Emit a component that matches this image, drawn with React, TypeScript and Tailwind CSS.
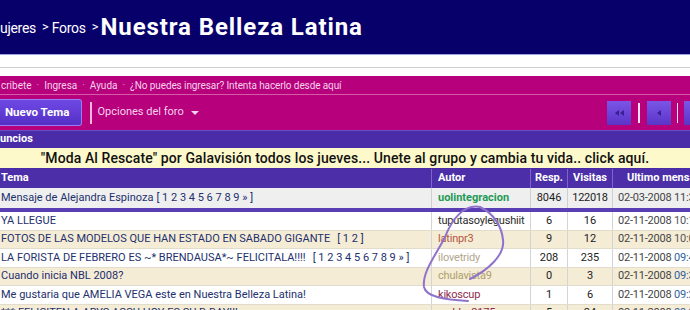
import React from 'react';

type Topic = {
  title: string;
  pages?: string;
  author: string;
  authorColor: string;
  resp: string;
  visits: string;
  date: string;
  time: string;
  timeColor: string;
  beige: boolean;
};

const TOPICS: Topic[] = [
  { title: 'YA LLEGUE', author: 'tuputasoylegushiit', authorColor: 'text-[#2a2a2a]', resp: '6', visits: '16', date: '02-11-2008', time: '10:19 PM', timeColor: 'text-[#555]', beige: false },
  { title: 'FOTOS DE LAS MODELOS QUE HAN ESTADO EN SABADO GIGANTE', pages: '[ 1 2 ]', author: 'latinpr3', authorColor: 'text-[#b3573c]', resp: '9', visits: '12', date: '02-11-2008', time: '10:07 PM', timeColor: 'text-[#555]', beige: true },
  { title: 'LA FORISTA DE FEBRERO ES ~* BRENDAUSA*~ FELICITALA!!!!', pages: '[ 1 2 3 4 5 6 7 8 9 » ]', author: 'ilovetridy', authorColor: 'text-[#b3a58e]', resp: '208', visits: '235', date: '02-11-2008', time: '09:40 PM', timeColor: 'text-[#2f5f9e]', beige: false },
  { title: 'Cuando inicia NBL 2008?', author: 'chulavista9', authorColor: 'text-[#ad9f6c]', resp: '0', visits: '3', date: '02-11-2008', time: '09:32 PM', timeColor: 'text-[#2f5f9e]', beige: true },
  { title: 'Me gustaria que AMELIA VEGA este en Nuestra Belleza Latina!', author: 'kikoscup', authorColor: 'text-[#8c2c4c]', resp: '1', visits: '6', date: '02-11-2008', time: '09:26 PM', timeColor: 'text-[#2f5f9e]', beige: false },
  { title: '*** FELICITEN A ARYS ACSU HOY ES SU B-DAY!!!', author: 'yaddsy2175', authorColor: 'text-[#8c2c4c]', resp: '5', visits: '24', date: '02-11-2008', time: '09:20 PM', timeColor: 'text-[#2f5f9e]', beige: true },
];

const COLS = 'grid grid-cols-[431px_99px_37px_45px_106px]';

const NavButton: React.FC<{ double?: boolean }> = ({ double }) => (
  <div className="w-[24px] h-[24px] bg-gradient-to-b from-[#7a55e6] to-[#5b34c8] flex items-center justify-center gap-[1px]">
    <span className="w-0 h-0 border-y-[3px] border-y-transparent border-r-[4px] border-r-[#3a1f95]" />
    {double && <span className="w-0 h-0 border-y-[3px] border-y-transparent border-r-[4px] border-r-[#3a1f95]" />}
  </div>
);

const App: React.FC = () => {
  return (
    <div className="w-[690px] h-[310px] overflow-hidden bg-white relative font-['Roboto',sans-serif]">
      <div className="w-[720px]">
        {/* breadcrumb */}
        <div className="h-[55px] bg-[#07006b] border-b border-[#9aa2e6] flex items-center text-white">
          <span className="text-[14px] tracking-[-0.3px] mt-[2px]">ujeres</span>
          <span className="text-[13px] ml-[6px] mr-[3px]">&gt;</span>
          <span className="text-[14px] tracking-[-0.3px] mt-[2px]">Foros</span>
          <span className="text-[13px] ml-[6px] mr-[2px]">&gt;</span>
          <span className="text-[24px] font-bold tracking-[0.9px]">Nuestra Belleza Latina</span>
        </div>
        <div className="h-[21px] bg-white flex flex-col">
          <div className="h-[12px]" />
          <div className="h-px bg-[#cfcfcf]" />
        </div>

        {/* links */}
        <div className="h-[19px] bg-[#b6007c] border-b border-[#d65aa8] flex items-center text-[10px] text-[#f6d2ec] gap-[5px]">
          <span className="ml-[1px]">cribete</span>
          <span className="text-[#e08cc6]">·</span>
          <span>Ingresa</span>
          <span className="text-[#e08cc6]">·</span>
          <span>Ayuda</span>
          <span className="text-[#e08cc6]">·</span>
          <span className="tracking-[-0.1px]">¿No puedes ingresar? Intenta hacerlo desde aquí</span>
        </div>

        {/* toolbar */}
        <div className="h-[35px] bg-[#b6007c] flex items-center pr-[12px]">
          <div className="h-[27px] w-[82px] rounded-r-[3px] border border-l-0 border-[#9a7cf0] bg-gradient-to-b from-[#6f48e4] to-[#5430c6] flex items-center pl-[5px] text-white text-[11.5px] font-bold">
            Nuevo Tema
          </div>
          <div className="w-[1.5px] h-[22px] bg-[#f2b8dc] ml-[8px]" />
          <div className="ml-[6px] flex items-center text-[11px] text-[#f6d2ec]">
            Opciones del foro
            <span className="ml-[7px] w-0 h-0 border-x-[4px] border-x-transparent border-t-[4px] border-t-[#f6d2ec]" />
          </div>
          <div className="ml-auto flex items-center">
            <NavButton double />
            <div className="w-[1.5px] h-[20px] bg-[#fbe0f0] mx-[7px]" />
            <NavButton />
            <div className="w-[1.5px] h-[20px] bg-[#fbe0f0] mx-[6px]" />
            <NavButton />
          </div>
        </div>

        {/* announcements */}
        <div className="h-[17px] bg-[#4a2ca8] border-t border-[#6a4cc8] flex items-center text-[11px] font-bold text-white">
          uncios
        </div>
        <div className="w-[690px] h-[22px] bg-[#fdf9cb] border-y border-[#4a2ca8] flex items-center justify-center text-[14px] font-medium text-[#111] tracking-[0.1px]">
          "Moda Al Rescate" por Galavisión todos los jueves... Unete al grupo y cambia tu vida.. click aquí.
        </div>

        {/* table header */}
        <div className={`${COLS} h-[19px] bg-[#4b2ea8] text-[11px] font-bold text-white`}>
          <div className="flex items-center pl-[1px]">Tema</div>
          <div className="flex items-center pl-[6px] border-l border-[#7a66cc]">Autor</div>
          <div className="flex items-center justify-center border-l border-[#7a66cc]">Resp.</div>
          <div className="flex items-center justify-center border-l border-[#7a66cc]">Visitas</div>
          <div className="flex items-center justify-center border-l border-[#7a66cc]">Ultimo mensaje</div>
        </div>

        {/* sticky */}
        <div className={`${COLS} h-[20px] bg-[#efefef] text-[11px] text-[#222]`}>
          <div className="flex items-center pl-[1px] text-[#23306e] whitespace-nowrap">
            Mensaje de Alejandra Espinoza <span className="ml-[3px]">[ 1 2 3 4 5 6 7 8 9 » ]</span>
          </div>
          <div className="flex items-center pl-[6px] border-l border-[#cfcfcf] font-bold text-[#1f9a55]">uolintegracion</div>
          <div className="flex items-center justify-center border-l border-[#cfcfcf]">8046</div>
          <div className="flex items-center justify-center border-l border-[#cfcfcf] tracking-[-0.3px]">122018</div>
          <div className="flex items-center pl-[5px] border-l border-[#cfcfcf] whitespace-nowrap text-[#444] tracking-[-0.2px]">02-03-2008 11:32 AM</div>
        </div>
        <div className="h-[4px] bg-[#5a3eb4]" />

        {/* topics */}
        {TOPICS.map((t, i) => (
          <div
            key={i}
            className={`${COLS} h-[18.5px] border-b border-[#e2dccd] text-[11px] text-[#222] ${t.beige ? 'bg-[#f5ecd6]' : 'bg-white'}`}
          >
            <div className="flex items-center pl-[1px] text-[#23306e] whitespace-nowrap overflow-hidden">
              {t.title}
              {t.pages && <span className="ml-[7px]">{t.pages}</span>}
            </div>
            <div className={`flex items-center pl-[6px] border-l border-[#d4d4d4] whitespace-nowrap overflow-hidden tracking-[-0.2px] ${t.authorColor}`}>{t.author}</div>
            <div className="flex items-center justify-center border-l border-[#d4d4d4]">{t.resp}</div>
            <div className="flex items-center justify-center border-l border-[#d4d4d4]">{t.visits}</div>
            <div className="flex items-center pl-[5px] border-l border-[#d4d4d4] whitespace-nowrap text-[#444] tracking-[-0.2px]">
              {t.date}&nbsp;<span className={t.timeColor}>{t.time}</span>
            </div>
          </div>
        ))}
      </div>

      {/* hand-drawn annotation circle */}
      <svg className="absolute left-0 top-0 pointer-events-none" width="690" height="310" viewBox="0 0 690 310">
        <path
          d="M470 279 C488 270 505 255 503 240 C502 228 495 214 480 207 C464 204 452 219 445 237 C436 255 422 272 424 287 C426 297 445 300 468 301"
          fill="none"
          stroke="#8f72cc"
          strokeWidth="2"
          strokeLinecap="round"
        />
      </svg>
    </div>
  );
};

export default App;
